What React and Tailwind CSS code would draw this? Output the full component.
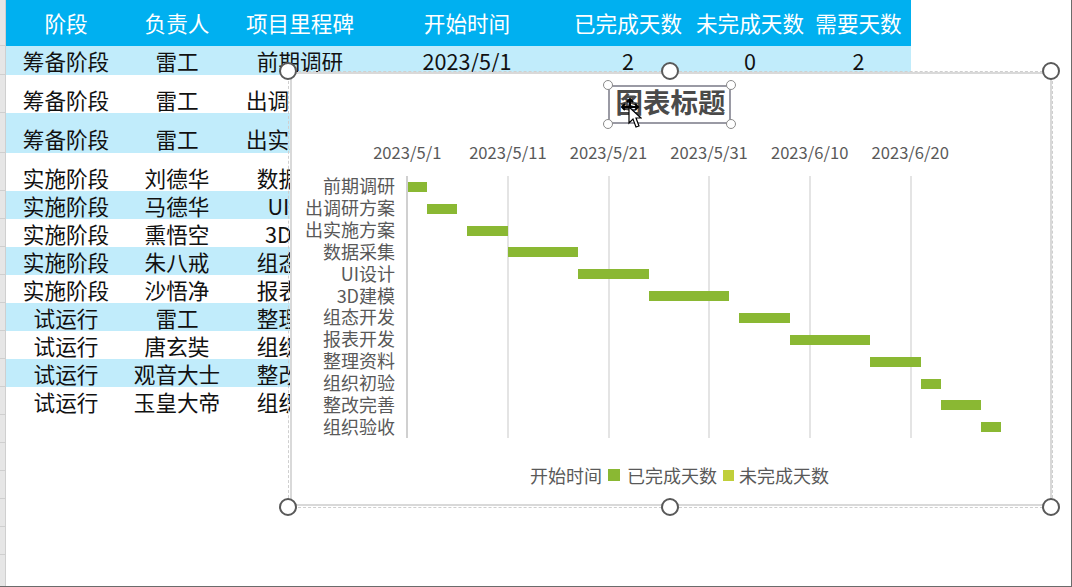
const sans = "font-['Noto_Sans_CJK_SC','Noto_Sans',sans-serif]";

const rows = [
  ['筹备阶段', '雷工', '前期调研', '2023/5/1', '2', '0', '2', 'h-[29px]', true],
  ['筹备阶段', '雷工', '出调研方案', '', '', '', '', 'h-[38px] pt-[12px]', false],
  ['筹备阶段', '雷工', '出实施方案', '', '', '', '', 'h-[40px] pt-[12px]', true],
  ['实施阶段', '刘德华', '数据采集', '', '', '', '', 'h-[38px] pt-[12px]', false],
  ['实施阶段', '马德华', 'UI设计', '', '', '', '', 'h-[28px] pt-[2px]', true],
  ['实施阶段', '熏悟空', '3D建模', '', '', '', '', 'h-[28px] pt-[2px]', false],
  ['实施阶段', '朱八戒', '组态开发', '', '', '', '', 'h-[28px] pt-[2px]', true],
  ['实施阶段', '沙悟净', '报表开发', '', '', '', '', 'h-[28px] pt-[2px]', false],
  ['试运行', '雷工', '整理资料', '', '', '', '', 'h-[28px] pt-[2px]', true],
  ['试运行', '唐玄奘', '组织初验', '', '', '', '', 'h-[28px] pt-[2px]', false],
  ['试运行', '观音大士', '整改完善', '', '', '', '', 'h-[28px] pt-[2px]', true],
  ['试运行', '玉皇大帝', '组织验收', '', '', '', '', 'h-[28px] pt-[2px]', false],
];

const bars = [
  ['前期调研', 0, 2],
  ['出调研方案', 2, 3],
  ['出实施方案', 6, 4],
  ['数据采集', 10, 7],
  ['UI设计', 17, 7],
  ['3D建模', 24, 8],
  ['组态开发', 33, 5],
  ['报表开发', 38, 8],
  ['整理资料', 46, 5],
  ['组织初验', 51, 2],
  ['整改完善', 53, 4],
  ['组织验收', 57, 2],
];

const dates = ['2023/5/1', '2023/5/11', '2023/5/21', '2023/5/31', '2023/6/10', '2023/6/20'];
const cols = ['w-[120px]', 'w-[102px]', 'w-[144px]', 'w-[190px]', 'w-[132px]', 'w-[112px]', 'w-[105px]'];
const heads = ['阶段', '负责人', '项目里程碑', '开始时间', '已完成天数', '未完成天数', '需要天数'];
const dayPx = 10.07;

function Handle({ className }) {
  return <div className={`absolute w-[18px] h-[18px] rounded-full bg-white border-2 border-[#595959] ${className}`} />;
}

function Dot({ className }) {
  return <div className={`absolute w-[10px] h-[10px] rounded-full bg-white border border-[#8a8a8a] ${className}`} />;
}

function Chart() {
  return (
    <div className="absolute left-[288px] top-[71px] w-[765px] h-[437px] border border-dashed border-[#cfcfcf]">
      <div className="ml-[1px] w-[762px] h-[434px] bg-white border-2 border-[#d9d9d9]">
        <div className="relative ml-[316px] mt-[11px] w-[123px] h-[39px] border-2 border-[#9a9aa4] flex items-center justify-center pb-[5px] pl-[2px] text-[27.5px] font-bold text-[#4a4a4a] leading-none whitespace-nowrap">
          图表标题
          <Dot className="-left-[7px] -top-[7px]" />
          <Dot className="-right-[7px] -top-[7px]" />
          <Dot className="-left-[7px] -bottom-[7px]" />
          <Dot className="-right-[7px] -bottom-[7px]" />
        </div>

        <div className="flex ml-[65px] mt-[17px] h-[22px] items-center text-[16.6px] text-[#595959]">
          {dates.map((d) => (
            <div key={d} className="w-[100.6px] text-center whitespace-nowrap">{d}</div>
          ))}
        </div>

        <div className="relative mt-[13px] h-[262px]">
          {[0, 1, 2, 3, 4, 5].map((i) => (
            <div
              key={i}
              className={`absolute top-0 bottom-0 w-[2px] ${i === 0 ? 'bg-[#d0d0d0]' : 'bg-[#e4e4e4]'}`}
              style={{ left: 114 + i * 100.8 }}
            />
          ))}
          <div className="relative flex flex-col">
            {bars.map(([name, start, days]) => {
              const left = start ? start * dayPx : 1;
              return (
                <div key={name} className="flex items-center h-[21.85px]">
                  <div className="w-[103px] pb-[3px] text-right text-[18px] leading-none text-[#595959] whitespace-nowrap">{name}</div>
                  <div className="ml-[12px] flex-1 h-[10px]">
                    <div
                      className="h-[10px] bg-[#8ab833]"
                      style={{ marginLeft: left, width: (start + days) * dayPx - left }}
                    />
                  </div>
                </div>
              );
            })}
          </div>
        </div>

        <div className="flex items-center ml-[238px] mt-[25px] h-[24px] text-[18px] leading-none text-[#595959] whitespace-nowrap">
          <span>开始时间</span>
          <span className="ml-[6px] w-[12px] h-[12px] bg-[#8ab833]" />
          <span className="ml-[7px]">已完成天数</span>
          <span className="ml-[6px] w-[11px] h-[11px] bg-[#c0cf3a]" />
          <span className="ml-[5px]">未完成天数</span>
        </div>
      </div>
    </div>
  );
}

export default function App() {
  return (
    <div className={`relative w-[1072px] h-[587px] overflow-hidden bg-white border-r border-b border-[#6b6b6b] ${sans}`}>
      <div className="flex">
        <div className="w-[6px] h-[586px] bg-[#e6e6e6] border-r border-[#cfcfcf] flex flex-col">
          {[46, 29, 38, 40, 38, 28, 28, 28, 28, 28, 28, 28, 28, 28, 28, 28, 28, 28].map((h, i) => (
            <div key={i} className="border-b border-[#cfcfcf] shrink-0" style={{ height: h }} />
          ))}
        </div>

        <div className="w-[905px]">
          <div className="flex h-[46px] items-center bg-[#00b0f0] text-white text-[21.6px]">
            {heads.map((h, i) => (
              <div key={h} className={`${cols[i]} text-center whitespace-nowrap`}>{h}</div>
            ))}
          </div>
          {rows.map((r, i) => (
            <div key={i} className={`flex items-center text-[21.6px] leading-none text-[#111] ${r[7]} ${r[8] ? 'bg-[#c1ecfb]' : 'bg-white'}`}>
              {cols.map((c, j) => (
                <div key={j} className={`${c} text-center whitespace-nowrap`}>{r[j]}</div>
              ))}
            </div>
          ))}
        </div>
      </div>

      <Chart />

      <Handle className="left-[279px] top-[62px]" />
      <Handle className="left-[661px] top-[62px]" />
      <Handle className="left-[1042px] top-[62px]" />
      <Handle className="left-[279px] top-[498px]" />
      <Handle className="left-[661px] top-[498px]" />
      <Handle className="left-[1042px] top-[498px]" />

      <svg className="absolute left-[620px] top-[98px]" width="22" height="32" viewBox="0 0 22 32">
        <path d="M2 9h16M5 6l-3 3 3 3M15 6l3 3-3 3M10 2v6M7 4l3-3 3 3" fill="none" stroke="#000" strokeWidth="2" />
        <path d="M9 9v16l4-4 3 8 3-1-3-8h5z" fill="#fff" stroke="#000" strokeWidth="1.2" />
      </svg>
    </div>
  );
}
